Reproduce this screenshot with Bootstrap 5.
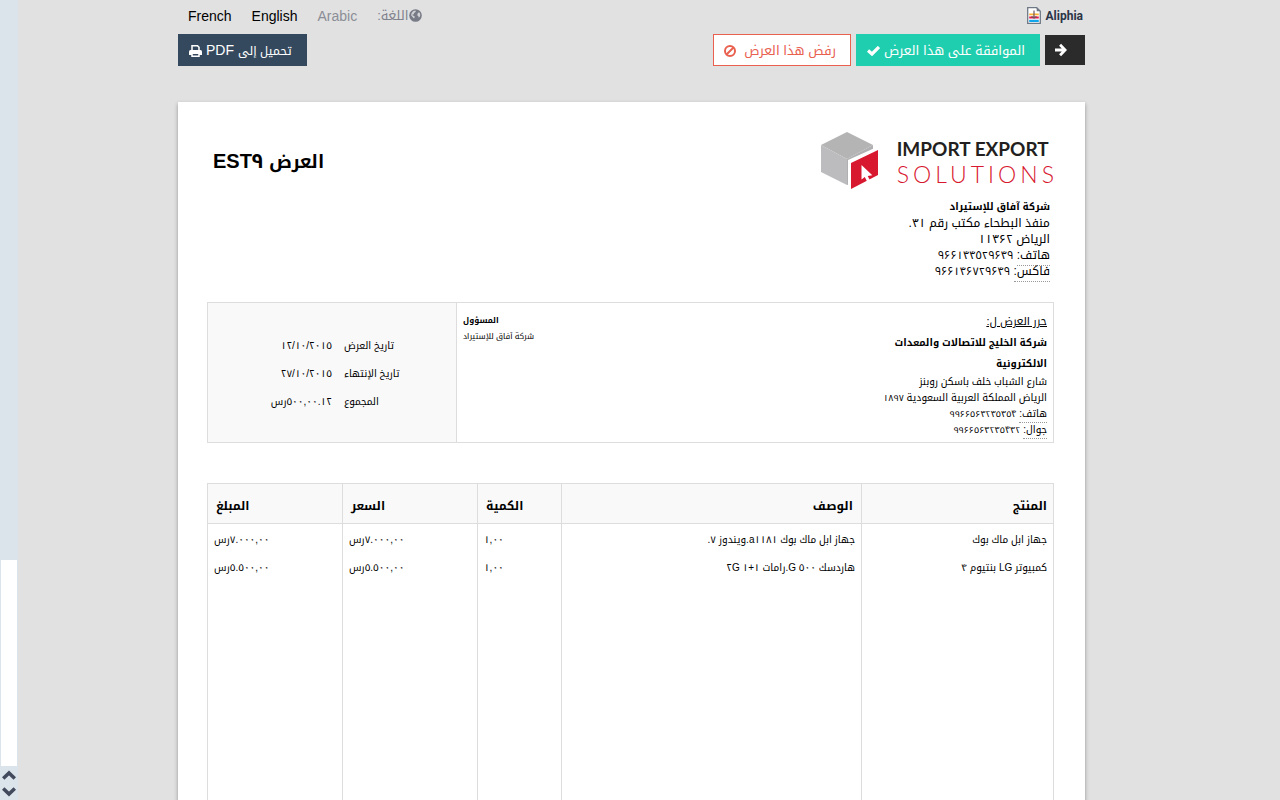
<!DOCTYPE html>
<html lang="ar" dir="rtl">
<head>
<meta charset="utf-8">
<meta name="viewport" content="width=device-width, initial-scale=1">
<title>العرض EST٩</title>
<link rel="stylesheet" href="https://cdn.jsdelivr.net/npm/bootstrap@5.3.0/dist/css/bootstrap.min.css">
<style>
  body { background: #e1e1e1; color: #000; font-family: "Liberation Sans", "Noto Kufi Arabic", "DejaVu Sans", sans-serif; font-size: 10px; line-height: 16px; padding-right: 17px; }
  .sheet-width { max-width: 907px; margin: 0 auto; }
  .fs-tiny { font-size: 8px; }
  .fs-num { font-size: 9px; }
  .fs-body { font-size: 10px; }
  .fs-sub { font-size: 11px; }
  .fs-addr { font-size: 12px; }
  .fs-btn { font-size: 13px; }
  .fs-ui { font-size: 14px; }

  /* scroll strip on the left edge */
  .scroll-strip { position: fixed; left: 0; top: 0; bottom: 0; width: 18px; background: #dce4eb; padding: 0 1px; }
  .scroll-thumb { height: 206px; width: 16px; background: #fff; }
  .scroll-strip button { height: 17px; width: 16px; line-height: 0; }

  /* top bar */
  .top-line { height: 34px; padding: 0 0 3px; }
  .lang-list { gap: 20px; padding-left: 10px; color: #7f828c; }
  .lang-list a { color: #000; text-decoration: none; }
  .lang-list a.current { color: #8b8e96; }
  .brand-link { gap: 5px; padding-right: 2px; }
  .brand-word { font: 700 12px/16px Roboto, sans-serif; color: #2b3446; }
  .act-group { gap: 5px; }
  .act { height: 32px; border-radius: 0; padding: 1px 14px 0 10px; border: 1px solid; line-height: 30px; }
  .act-next { background: #2b2b2b; color: #fff; border-color: #2b2b2b; height: 30px; width: 40px; padding: 0 17px 0 9px; }
  .act-ok { background: #1fceae; color: #fff; border-color: #1fceae; }
  .act-no { background: #fff; color: #e9604f; border-color: #e9604f; }
  .act-pdf { background: #34495e; color: #fff; border-color: #34495e; }

  /* sheet */
  .sheet { background: #fff; margin-top: 36px; padding: 30px 31px 40px 29px; box-shadow: 0 2px 4px rgba(0, 0, 0, .35); }
  .sheet-title { font-size: 20px; font-weight: 700; line-height: 24px; margin: 17px 0 0 6px; }
  .sheet-title span { font-size: 18px; }
  .logo-row { gap: 18px; }
  .logo-top { font: 700 19px/26px Lato, sans-serif; color: #231f20; padding-top: 4px; }
  .logo-sub { font: 300 23px/24px Lato, sans-serif; color: #d7182f; letter-spacing: 4px; margin-right: -8px; }
  .issuer { margin-top: 9px; padding-right: 4px; }
  .dotted { border-bottom: 1px dotted #999; padding-bottom: 3px; }
  .line { height: 16px; }

  .info { margin-top: 23px; border: 1px solid #ddd; height: 141px; }
  .info-client { width: 190px; padding: 10px 6px 0 0; }
  .info-client .client-name { line-height: 21px; margin-top: 3px; }
  .info-owner { padding: 10px 0 0 6px; }
  .info-dates { width: 249px; background: #f9f9f9; border-right: 1px solid #ddd; }
  .info-dates table { width: 100%; margin-top: 29px; }
  .info-dates th { width: 112px; font-weight: 400; }
  .info-dates th, .info-dates td { height: 28px; padding: 0; }
  .info-dates td { padding-right: 12px; }

  .lines { margin-top: 40px; table-layout: fixed; width: 100%; border: 1px solid #ddd; }
  .lines th { background: #f9f9f9; font-size: 12px; height: 40px; padding: 4px 8px 0; border: 1px solid #ddd; }
  .lines th:first-child, .lines td:first-child { padding-right: 6px; }
  .lines td { height: 28px; padding: 4px 6px 0; border: solid #ddd; border-width: 0 1px; }
  .lines .blank td { height: 400px; }
  .col-item { width: 22.7%; }
  .col-desc { width: 35.5%; }
  .col-qty { width: 9.9%; }
</style>
</head>
<body class="vh-100 overflow-hidden">

<div class="scroll-strip d-flex flex-column justify-content-end">
  <div class="scroll-thumb"></div>
  <button type="button" class="btn p-0 border-0 rounded-0" aria-label="أعلى"><svg width="14" height="10" viewBox="0 0 14 10" fill="none" stroke="#424a5e" stroke-width="3.600"><path d="M1.200 8.500L7 3l5.800 5.500"/></svg></button>
  <button type="button" class="btn p-0 border-0 rounded-0" aria-label="أسفل"><svg width="14" height="10" viewBox="0 0 14 10" fill="none" stroke="#424a5e" stroke-width="3.600"><path d="M1.200 1.500L7 7l5.800-5.500"/></svg></button>
</div>

<div class="sheet-width">
  <header>
    <div class="top-line d-flex justify-content-between align-items-center">
      <a href="#" class="brand-link d-flex align-items-center text-decoration-none" dir="ltr">
        <svg width="14" height="17" viewBox="0 0 14 17"><path d="M.7.7h9l3.600 3.600v12H.7z" fill="#fff" stroke="#6f7885" stroke-width="1.300"/><path d="M9.700.7v3.600h3.600z" fill="#6f7885"/><path d="M2.200 6.500h9.600v1.800H2.200z" fill="#f9b233"/><path d="M2.200 9.500h9.600v2H2.200z" fill="#e8174b"/><path d="M2.200 12.800h9.600v2.200H2.200z" fill="#12a5ea"/><path d="M7 3.500v7M4.500 9.500L7 11l2.500-1.500" fill="none" stroke="#6f5560" stroke-width="1.200"/></svg>
        <span class="brand-word">Aliphia</span>
      </a>
      <nav class="lang-list d-flex align-items-center fs-ui">
        <span class="d-flex align-items-center"><svg width="13" height="13" viewBox="0 0 13 13"><circle cx="6.500" cy="6.500" r="6.300" fill="#777b86"/><path d="M6 1.500l1 .5-.8 1.200-1.400 1 .2 1-1.600.3.300 1 1.500.5.600 1.100-.8 1.500-1.400-1.600-1.400-1.600.2-2 1.600-2.100zM9 3.800l1.600-.4.7 2.400-.3 1.600-1.200 1.300-.5-1.700-1.200-.8z" fill="#d2d3d6"/></svg><span class="fs-btn">اللغة:</span></span>
        <a href="#" class="current">Arabic</a>
        <a href="#">English</a>
        <a href="#">French</a>
      </nav>
    </div>
    <div class="d-flex align-items-center justify-content-between">
      <div class="act-group d-flex align-items-center">
        <button type="button" class="btn act act-next d-flex align-items-center justify-content-center" aria-label="التالي"><svg width="13" height="14" viewBox="0 0 13 14" fill="none" stroke="#fff" stroke-width="3"><path d="M0 7h11M5.500 1.300L11 7l-5.500 5.700"/></svg></button>
        <button type="button" class="btn act act-ok fs-btn d-flex align-items-center gap-1">الموافقة على هذا العرض<svg width="13" height="10" viewBox="0 0 13 10" fill="none" stroke="#fff" stroke-width="3.300"><path d="M1 4.500l4 3.500 7-7"/></svg></button>
        <button type="button" class="btn act act-no fs-btn d-flex align-items-center gap-2">رفض هذا العرض<svg width="12" height="12" viewBox="0 0 12 12" fill="none" stroke="#e9604f" stroke-width="2"><circle cx="6" cy="6" r="5"/><path d="M2.500 9.500l7-7"/></svg></button>
      </div>
      <button type="button" class="btn act act-pdf fs-ui d-flex align-items-center gap-1"><span><span class="fs-addr">تحميل إلى</span> PDF</span><svg width="13" height="12" viewBox="0 0 13 12"><path d="M3 5.500V.8h5.500L10 2.300v3.200" fill="none" stroke="#fff" stroke-width="1.500"/><path d="M1.500 5h10q1.500 0 1.500 1.500V10H0V6.500Q0 5 1.500 5z" fill="#fff"/><path d="M3 8.200h7v3H3z" fill="#34495e" stroke="#fff" stroke-width="1.500"/></svg></button>
    </div>
  </header>

  <main class="sheet">
    <div class="d-flex justify-content-between">
      <div>
        <div class="logo-row d-flex align-items-start justify-content-end" dir="ltr">
          <svg width="58" height="58" viewBox="0 0 58 58"><path d="M0 13L26 0l26 13-26 14z" fill="#b4b4b5"/><path d="M0 13l26 14v26L0 40z" fill="#bcbcbe"/><path d="M26 27l26-14v5L29 29v23l-3 1z" fill="#b0b0b2"/><path d="M27 28l29-13v4L30 31v24h-3z" fill="#fff"/><path d="M30 31l27-13v25L30 57z" fill="#d7182f"/><path d="M40.500 33v14.500l3.300-2.500 2.800 5.500 2.700-1.500-2.600-5 4.600-.7z" fill="#fff"/></svg>
          <div class="pe-1"><div class="logo-top">IMPORT EXPORT</div><div class="logo-sub">SOLUTIONS</div></div>
        </div>
        <address class="issuer fs-addr mb-0">
          <div class="line fs-body fw-bold">شركة آفاق للإستيراد</div>
          <div class="line">منفذ البطحاء مكتب رقم ٣١.</div>
          <div class="line">الرياض ١١٣۶٢</div>
          <div class="line"><span class="dotted">هاتف:</span> <span class="fs-sub">٩۶۶١۴۴٥٢٩۶۴٩</span></div>
          <div class="line"><span class="dotted">فاكس:</span> <span class="fs-sub">٩۶۶١۴۶٧٢٩۶۴٩</span></div>
        </address>
      </div>
      <h1 class="sheet-title"><span>العرض</span> EST٩</h1>
    </div>

    <section class="info d-flex">
      <div class="info-client">
        <div class="line fs-sub"><u>حرر العرض ل:</u></div>
        <div class="client-name fw-bold">شركة الخليج للاتصالات والمعدات الالكترونية</div>
        <div class="line">شارع الشباب خلف باسكن روبنز</div>
        <div class="line">الرياض المملكة العربية السعودية <span class="fs-num">١٨٩٧</span></div>
        <div class="line"><span class="dotted">هاتف:</span> <span class="fs-num">٩٩۶۶٥۶٣٢٣٥٣٥۴</span></div>
        <div class="line"><span class="dotted">جوال:</span> <span class="fs-num">٩٩۶۶٥۶٣٢٣٥۴٣٢</span></div>
      </div>
      <div class="info-owner flex-grow-1 text-start fs-tiny">
        <div class="line fw-bold">المسؤول</div>
        <div class="line">شركة آفاق للإستيراد</div>
      </div>
      <div class="info-dates">
        <table>
          <tr><th scope="row" class="text-start">تاريخ العرض</th><td>١٢/١٠/٢٠١٥</td></tr>
          <tr><th scope="row" class="text-start">تاريخ الإنتهاء</th><td>٢٧/١٠/٢٠١٥</td></tr>
          <tr><th scope="row" class="text-start">المجموع</th><td>٥٠٠,٠٠.١٢رس</td></tr>
        </table>
      </div>
    </section>

    <table class="lines">
      <colgroup><col class="col-item"><col class="col-desc"><col class="col-qty"><col><col></colgroup>
      <thead><tr><th>المنتج</th><th>الوصف</th><th class="text-start">الكمية</th><th class="text-start">السعر</th><th class="text-start">المبلغ</th></tr></thead>
      <tbody>
        <tr><td>جهاز ابل ماك بوك</td><td>جهاز ابل ماك بوك a١١٨١.ويندوز ٧.</td><td class="text-start">١,٠٠</td><td class="text-start">٧.٠٠٠,٠٠رس</td><td class="text-start">٧.٠٠٠,٠٠رس</td></tr>
        <tr><td>كمبيوتر LG بنتيوم ۴</td><td>هاردسك ٥٠٠ G.رامات ١+١ ٢G</td><td class="text-start">١,٠٠</td><td class="text-start">٥.٥٠٠,٠٠رس</td><td class="text-start">٥.٥٠٠,٠٠رس</td></tr>
        <tr class="blank"><td></td><td></td><td></td><td></td><td></td></tr>
      </tbody>
    </table>
  </main>
</div>
<script src="https://cdn.jsdelivr.net/npm/bootstrap@5.3.0/dist/js/bootstrap.bundle.min.js"></script>
</body>
</html>
